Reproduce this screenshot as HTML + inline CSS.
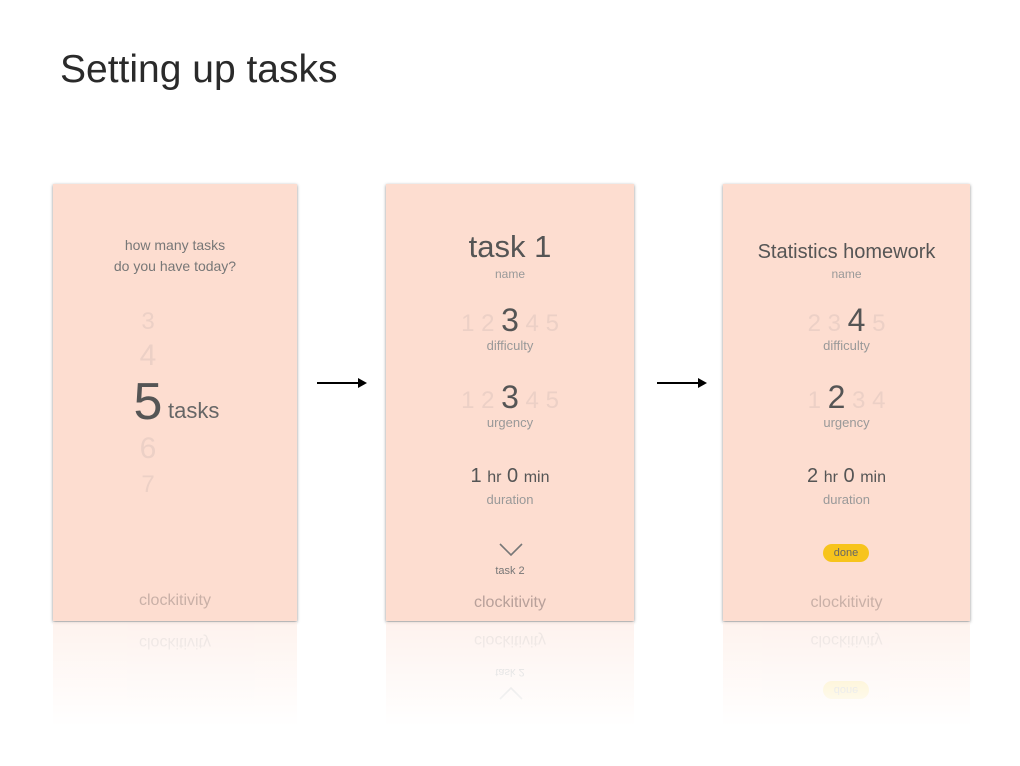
<!DOCTYPE html>
<html style="overflow:hidden"><head><meta charset="utf-8"><style>
*{margin:0;padding:0;box-sizing:border-box}
body{width:1020px;height:766px;background:#fff;position:relative;overflow:hidden;font-family:"Liberation Sans",sans-serif}
h1{position:absolute;left:60px;top:48px;font-size:39px;font-weight:normal;color:#2a2a2a;letter-spacing:0}
.card{position:absolute;top:184px;height:437px;background:#fdddd0;box-shadow:0 1px 3px rgba(0,0,0,.45);overflow:hidden}
.t{position:absolute;left:0;width:100%;text-align:center;white-space:nowrap}
.f{color:#ecd0c6}.d{color:#555}.g{color:#999}.m{color:#777}.c{color:#c9b0a7}
.refl{position:absolute;top:622px;height:110px;overflow:hidden}
.refl .inner{position:absolute;left:0;top:-437px;width:100%;height:437px;background:#fdddd0;transform:scaleY(-1);transform-origin:50% 100%;opacity:.5}
.refl .fade{position:absolute;left:0;top:0;width:100%;height:100%;background:linear-gradient(rgba(255,255,255,.3),#fff 95%)}
.arrow{position:absolute;height:2px;background:#000}
.arrow:after{content:"";position:absolute;right:-2px;top:-4px;border-left:9px solid #000;border-top:5px solid transparent;border-bottom:5px solid transparent}
</style></head><body>
<h1>Setting up tasks</h1>

<div class="card" style="left:53px;width:244px" id="c1">
<div class="t m" style="top:53px;font-size:14px">how many tasks</div>
<div class="t m" style="top:74px;font-size:14px">do you have today?</div>
<div class="t f" style="top:124px;font-size:24px;left:-27px">3</div>
<div class="t f" style="top:155px;font-size:30px;left:-27px">4</div>
<div class="t f" style="top:248px;font-size:30px;left:-27px">6</div>
<div class="t f" style="top:287px;font-size:24px;left:-27px">7</div>
<div class="t d" style="top:188px;font-size:52px;left:-27px">5</div>
<div class="t" style="top:214px;left:115px;width:auto;font-size:22px;color:#666">tasks</div>
<div class="t c" style="top:408px;font-size:16px">clockitivity</div>
</div>

<div class="card" style="left:386px;width:248px">
<div class="t d" style="top:45px;font-size:31px">task 1</div>
<div class="t g" style="top:83px;font-size:12px">name</div>
<div class="t" style="top:118px;font-size:24px"><span class="f">1 2 </span><span class="d" style="font-size:32px">3</span><span class="f"> 4 5</span></div>
<div class="t g" style="top:154px;font-size:13px">difficulty</div>
<div class="t" style="top:195px;font-size:24px"><span class="f">1 2 </span><span class="d" style="font-size:32px">3</span><span class="f"> 4 5</span></div>
<div class="t g" style="top:231px;font-size:13px">urgency</div>
<div class="t" style="top:281px;color:#555;font-size:20px">1 <span style="font-size:16px">hr</span> 0 <span style="font-size:16px">min</span></div>
<div class="t g" style="top:308px;font-size:13px">duration</div>
<svg style="position:absolute;left:113px;top:359px" width="24" height="14"><path d="M1 1 L12 12 L23 1" fill="none" stroke="#777" stroke-width="1.6"/></svg>
<div class="t" style="top:381px;font-size:11px;color:#777">task 2</div>
<div class="t c" style="top:410px;font-size:16px;color:#b8a09a">clockitivity</div>
</div>

<div class="card" style="left:723px;width:247px">
<div class="t d" style="top:57px;font-size:20px">Statistics homework</div>
<div class="t g" style="top:83px;font-size:12px">name</div>
<div class="t" style="top:118px;font-size:24px"><span class="f">2 3 </span><span class="d" style="font-size:32px">4</span><span class="f"> 5</span></div>
<div class="t g" style="top:154px;font-size:13px">difficulty</div>
<div class="t" style="top:195px;font-size:24px"><span class="f">1 </span><span class="d" style="font-size:32px">2</span><span class="f"> 3 4</span></div>
<div class="t g" style="top:231px;font-size:13px">urgency</div>
<div class="t" style="top:281px;color:#555;font-size:20px">2 <span style="font-size:16px">hr</span> 0 <span style="font-size:16px">min</span></div>
<div class="t g" style="top:308px;font-size:13px">duration</div>
<div style="position:absolute;left:100px;top:360px;width:46px;height:18px;border-radius:9px;background:#f7c41c;color:#666;font-size:11px;text-align:center;line-height:18px">done</div>
<div class="t c" style="top:410px;font-size:16px">clockitivity</div>
</div>

<div class="refl" style="left:53px;width:244px"><div class="inner">
<div class="t c" style="top:408px;font-size:16px">clockitivity</div></div><div class="fade"></div></div>
<div class="refl" style="left:386px;width:248px"><div class="inner">
<svg style="position:absolute;left:113px;top:359px" width="24" height="14"><path d="M1 1 L12 12 L23 1" fill="none" stroke="#777" stroke-width="1.6"/></svg>
<div class="t" style="top:381px;font-size:11px;color:#777">task 2</div>
<div class="t c" style="top:410px;font-size:16px">clockitivity</div></div><div class="fade"></div></div>
<div class="refl" style="left:723px;width:247px"><div class="inner">
<div style="position:absolute;left:100px;top:360px;width:46px;height:18px;border-radius:9px;background:#f7c41c;color:#666;font-size:11px;text-align:center;line-height:18px">done</div>
<div class="t c" style="top:410px;font-size:16px">clockitivity</div></div><div class="fade"></div></div>

<div class="arrow" style="left:317px;top:382px;width:48px"></div>
<div class="arrow" style="left:657px;top:382px;width:48px"></div>
</body></html>
